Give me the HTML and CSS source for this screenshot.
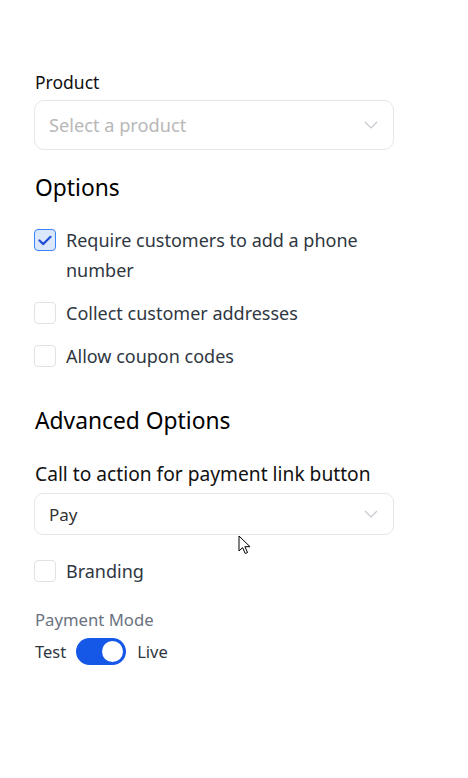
FILE: index.html
```html
<!DOCTYPE html>
<html>
<head>
<meta charset="utf-8">
<link rel="stylesheet" href="styles.css">
</head>
<body>
<div class="form">
  <label class="field-label">Product</label>
  <div class="select select-lg">
    <span class="placeholder">Select a product</span>
    <svg class="chev" width="14" height="8" viewBox="0 0 14 8"><path d="M1 1l6 6 6-6" fill="none" stroke="#c4c8cc" stroke-width="1.2"/></svg>
  </div>

  <h2 class="heading">Options</h2>
  <div class="checks">
    <div class="check">
      <span class="box checked"><svg width="14" height="11" viewBox="0 0 14 11"><path d="M1.5 5.5l3.8 3.6L12.5 1.8" fill="none" stroke="#1d4ed8" stroke-width="2.2" stroke-linecap="round" stroke-linejoin="round"/></svg></span>
      <span class="check-text">Require customers to add a phone number</span>
    </div>
    <div class="check">
      <span class="box"></span>
      <span class="check-text">Collect customer addresses</span>
    </div>
    <div class="check">
      <span class="box"></span>
      <span class="check-text">Allow coupon codes</span>
    </div>
  </div>

  <h2 class="heading heading-adv">Advanced Options</h2>
  <label class="field-label cta-label">Call to action for payment link button</label>
  <div class="select select-sm">
    <span class="value">Pay</span>
    <svg class="chev" width="14" height="8" viewBox="0 0 14 8"><path d="M1 1l6 6 6-6" fill="none" stroke="#c4c8cc" stroke-width="1.2"/></svg>
  </div>
  <div class="check branding">
    <span class="box"></span>
    <span class="check-text">Branding</span>
  </div>

  <div class="mode-label">Payment Mode</div>
  <div class="toggle-row">
    <span class="toggle-text">Test</span>
    <span class="toggle"><span class="knob"></span></span>
    <span class="toggle-text">Live</span>
  </div>
</div>
<svg class="cursor" width="14" height="20" viewBox="0 0 14 20"><path d="M1 1v15l3.6-3.4 2.6 5.9 2.3-1-2.6-5.8H12z" fill="#fff" stroke="#000" stroke-width="1"/></svg>
</body>
</html>
```
FILE: styles.css
```css
html, body {
  margin: 0;
  padding: 0;
  background: #fff;
}
body {
  font-family: "Noto Sans", "Open Sans", sans-serif;
  color: #111;
  position: relative;
  width: 468px;
  height: 778px;
  overflow: hidden;
}
.form {
  padding: 70px 74px 0 34px;
  display: flex;
  flex-direction: column;
}
.field-label {
  font-size: 17.5px;
  line-height: 24px;
  color: #111;
  padding-left: 1px;
}
.select {
  box-sizing: border-box;
  border: 1px solid #e3e8e6;
  border-radius: 10px;
  display: flex;
  align-items: center;
  justify-content: space-between;
  padding: 0 14px 0 14px;
}
.select-lg {
  height: 50px;
  margin-top: 6px;
}
.select-sm {
  height: 42px;
  margin-top: 6px;
  border-radius: 9px;
}
.placeholder {
  font-size: 18.2px;
  color: #b8b8b8;
}
.value {
  font-size: 17px;
  color: #333;
}
.chev {
  margin-right: 1px;
}
.heading {
  font-size: 22.8px;
  font-weight: 400;
  margin: 24px 0 0 1px;
  line-height: 28px;
  color: #000;
}
.checks {
  display: flex;
  flex-direction: column;
  gap: 13px;
  margin-top: 23px;
}
.check {
  display: flex;
  align-items: flex-start;
  gap: 10px;
}
.box {
  flex: none;
  box-sizing: border-box;
  width: 22px;
  height: 22px;
  margin-top: 4px;
  border: 1px solid #dfe3e1;
  border-radius: 4px;
  background: #fff;
  display: flex;
  align-items: center;
  justify-content: center;
}
.box.checked {
  border: 1.5px solid #3b82f6;
  background: #dbe7fb;
}
.check-text {
  font-size: 18px;
  line-height: 30px;
  color: #2f3742;
}
.heading-adv {
  margin-top: 36px;
}
.cta-label {
  margin-top: 26px;
  font-size: 19.2px;
  line-height: 26px;
}
.branding {
  margin-top: 21px;
}
.mode-label {
  margin-top: 23px;
  font-size: 16.7px;
  line-height: 22px;
  color: #6b7280;
  padding-left: 1px;
}
.toggle-row {
  display: flex;
  align-items: center;
  gap: 10px;
  margin-top: 7px;
}
.toggle-text {
  font-size: 16.5px;
  color: #2f3742;
  padding-left: 1px;
}
.toggle {
  width: 50px;
  height: 27px;
  border-radius: 14px;
  background: #1558e8;
  display: flex;
  align-items: center;
  justify-content: flex-end;
  padding-right: 3px;
  box-sizing: border-box;
}
.knob {
  width: 21px;
  height: 21px;
  border-radius: 50%;
  background: #fff;
}
.cursor {
  position: absolute;
  left: 238px;
  top: 535px;
}
```
